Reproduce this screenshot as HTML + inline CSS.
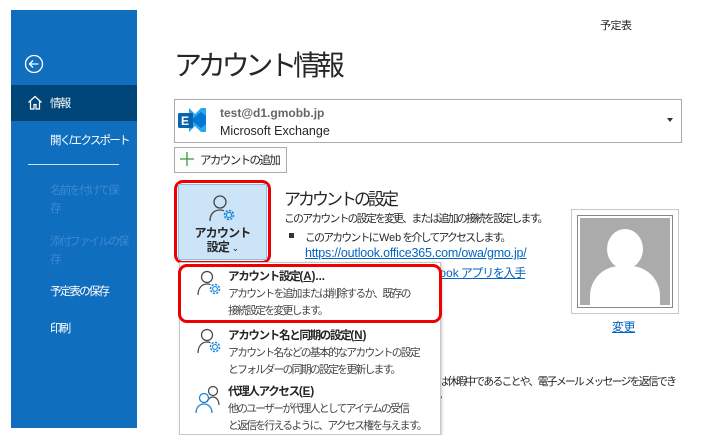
<!DOCTYPE html>
<html><head><meta charset="utf-8"><style>
*{margin:0;padding:0;box-sizing:border-box}
body{width:705px;height:435px;background:#fff;position:relative;overflow:hidden;font-family:"Liberation Sans","Noto Sans CJK JP",sans-serif;color:#262626}
.a{position:absolute;white-space:nowrap}
.n{letter-spacing:0}
.side{position:absolute;left:11px;top:10px;width:126px;height:418px;background:#106ebe}
.sel{position:absolute;left:11px;top:85px;width:126px;height:36px;background:#004578}
.st{color:#fff;font-size:11.5px;letter-spacing:-1.8px}
.dim{color:#3c8ad0;font-size:11.5px;line-height:18px;letter-spacing:-1.8px}
.lnk{color:#0563c1;text-decoration:underline}
.t12{font-size:10.8px;letter-spacing:-1.7px}
.d{font-size:10.8px;line-height:17px;color:#444;letter-spacing:-1.7px}
.h{font-size:11.5px;font-weight:bold;letter-spacing:-1.3px}
</style></head><body>
<div class="side"></div><div class="sel"></div>
<svg class="a" style="left:24px;top:54px" width="20" height="20" viewBox="0 0 20 20"><circle cx="10" cy="10" r="8.5" fill="none" stroke="#fff" stroke-width="1.3"/><path d="M14.5 10H5.5M9 6.5L5.5 10 9 13.5" fill="none" stroke="#fff" stroke-width="1.3"/></svg>
<svg class="a" style="left:27px;top:95px" width="16" height="15" viewBox="0 0 16 15"><path d="M1.5 7.5L8 1.5l6.5 6M3.5 6v8h3.5v-4.5h2V14h3.5V6" fill="none" stroke="#fff" stroke-width="1.2"/></svg>
<div class="a st" style="left:50px;top:95px">情報</div>
<div class="a st" style="left:50px;top:132px">開く/エクスポート</div>
<div class="a" style="left:28px;top:164px;width:91px;height:1px;background:#cfe1f3"></div>
<div class="a dim" style="left:50px;top:182px">名前を付けて保<br>存</div>
<div class="a dim" style="left:50px;top:233px">添付ファイルの保<br>存</div>
<div class="a st" style="left:50px;top:283px">予定表の保存</div>
<div class="a st" style="left:50px;top:320px">印刷</div>

<div class="a" style="left:600px;top:17px;font-size:11px;letter-spacing:-0.5px">予定表</div>
<div class="a" style="left:174px;top:44px;font-size:28px;color:#262626;letter-spacing:-4.2px">アカウント情報</div>

<div class="a" style="left:174px;top:99px;width:508px;height:44px;border:1px solid #ababab"></div>
<svg class="a" style="left:177px;top:104px" width="30" height="32" viewBox="0 0 30 32"><path d="M12 4l6 6 6-6h5v8l-5 4 5 4v8h-5l-6-6-6 6z" fill="#28a8ea"/><path d="M14 16l10-8 5 4v8l-5 4z" fill="#0078d4"/><rect x="1" y="9" width="15" height="15" rx="1.5" fill="#0a64ad"/><text x="4" y="21" font-family="Liberation Sans" font-weight="bold" font-size="12" fill="#fff">E</text></svg>
<div class="a" style="left:220px;top:106px;font-size:12px;color:#666;font-weight:bold">test@d1.gmobb.jp</div>
<div class="a" style="left:220px;top:124px;font-size:12.5px;color:#262626">Microsoft Exchange</div>
<div class="a" style="left:667px;top:118px;width:0;height:0;border-left:3.5px solid transparent;border-right:3.5px solid transparent;border-top:4px solid #333"></div>

<div class="a" style="left:174px;top:147px;width:113px;height:26px;border:1px solid #ababab;background:#fdfdfd"></div>
<svg class="a" style="left:179px;top:151px" width="16" height="16" viewBox="0 0 16 16"><path d="M8 1v14M1 8h14" stroke="#3a9a3a" stroke-width="1.3"/></svg>
<div class="a" style="left:200px;top:152px;font-size:11.5px;letter-spacing:-1.6px">アカウントの追加</div>

<div class="a" style="left:174px;top:180px;width:97px;height:84px;border:3px solid #e00;border-radius:9px"></div>
<div class="a" style="left:178px;top:184px;width:89px;height:76px;background:#cce4f7;border:1px solid #8fbde8"></div>
<svg class="a" style="left:207px;top:193px" width="32" height="32" viewBox="0 0 32 32"><circle cx="13" cy="9" r="6" fill="none" stroke="#444" stroke-width="1.3"/><path d="M3 28c0-7 4-11 10-11 2 0 3 .3 4 .8" fill="none" stroke="#444" stroke-width="1.3"/><circle cx="22" cy="22" r="4.5" fill="none" stroke="#1a86d9" stroke-width="1.6" stroke-dasharray="2.2 1.3"/><circle cx="22" cy="22" r="2.6" fill="none" stroke="#1a86d9" stroke-width="1.2"/></svg>
<div class="a" style="left:178px;top:226px;width:89px;text-align:center;font-size:12px;font-weight:bold;line-height:14px;letter-spacing:-0.8px">アカウント<br>設定 <span style="font-weight:normal;font-size:9px">⌄</span></div>

<div class="a" style="left:284px;top:185px;font-size:17px;letter-spacing:-3px">アカウントの設定</div>
<div class="a t12" style="left:284px;top:210px">このアカウントの設定を変更、または追加の接続を設定します。</div>
<div class="a" style="left:289px;top:233px;width:5px;height:5px;background:#333"></div>
<div class="a t12" style="left:305px;top:229px">このアカウントに <span class="n">Web</span> を介してアクセスします。</div>
<div class="a lnk" style="left:305px;top:246px;font-size:12.5px;letter-spacing:-0.2px">https://outlook.office365.com/owa/gmo.jp/</div>
<div class="a lnk" style="left:305px;top:264px;font-size:12px;letter-spacing:-1.3px"><span class="n">iOS</span> または <span class="n">Android</span> 用 <span class="n">Outlook</span> アプリを入手</div>

<div class="a" style="left:571px;top:209px;width:108px;height:105px;border:1px solid #c8c8c8;background:#fff"></div>
<div class="a" style="left:577px;top:215px;width:96px;height:93px;border:1px solid #888;background:#fff;padding:2px"><div style="width:100%;height:100%;background:#ababab;position:relative;overflow:hidden"><div style="position:absolute;left:27px;top:11px;width:36px;height:40px;border-radius:50%;background:#fff"></div><div style="position:absolute;left:10px;top:48px;width:70px;height:60px;border-radius:30px 30px 0 0;background:#fff"></div></div></div>
<div class="a lnk" style="left:612px;top:318px;font-size:12px;letter-spacing:-0.5px">変更</div>

<div class="a t12" style="left:438px;top:373px">は休暇中であることや、電子メール メッセージを返信でき</div>
<div class="a t12" style="left:438px;top:386px">。</div>

<div class="a" style="left:179px;top:262px;width:262px;height:173px;background:#fff;border:1px solid #c6c6c6;box-shadow:1px 1px 3px rgba(0,0,0,.2)"></div>
<div class="a" style="left:178px;top:264px;width:264px;height:59px;border:3px solid #e00;border-radius:9px"></div>

<svg class="a" style="left:196px;top:270px" width="28" height="28" viewBox="0 0 28 28"><circle cx="11" cy="7" r="5.5" fill="none" stroke="#444" stroke-width="1.2"/><path d="M2 25c0-7 4-11 9-11 1.5 0 2.5.3 3.5.7" fill="none" stroke="#444" stroke-width="1.2"/><circle cx="19" cy="19" r="4.5" fill="none" stroke="#1a86d9" stroke-width="1.5" stroke-dasharray="2.2 1.3"/><circle cx="19" cy="19" r="2.4" fill="none" stroke="#1a86d9" stroke-width="1.1"/></svg>
<div class="a h" style="left:228px;top:268px">アカウント設定<span class="n">(<u>A</u>)...</span></div>
<div class="a d" style="left:228px;top:286px">アカウントを追加または削除するか、既存の<br>接続設定を変更します。</div>

<svg class="a" style="left:196px;top:328px" width="28" height="28" viewBox="0 0 28 28"><circle cx="11" cy="7" r="5.5" fill="none" stroke="#444" stroke-width="1.2"/><path d="M2 25c0-7 4-11 9-11 1.5 0 2.5.3 3.5.7" fill="none" stroke="#444" stroke-width="1.2"/><circle cx="19" cy="19" r="4.5" fill="none" stroke="#1a86d9" stroke-width="1.5" stroke-dasharray="2.2 1.3"/><circle cx="19" cy="19" r="2.4" fill="none" stroke="#1a86d9" stroke-width="1.1"/></svg>
<div class="a h" style="left:228px;top:327px">アカウント名と同期の設定<span class="n">(<u>N</u>)</span></div>
<div class="a d" style="left:228px;top:345px">アカウント名などの基本的なアカウントの設定<br>とフォルダーの同期の設定を更新します。</div>

<svg class="a" style="left:194px;top:384px" width="30" height="30" viewBox="0 0 30 30"><circle cx="19" cy="7" r="4.5" fill="none" stroke="#444" stroke-width="1.2"/><path d="M13 18c1-3 3-5 6-5s6 3 6 8" fill="none" stroke="#444" stroke-width="1.2"/><circle cx="10" cy="14" r="4.5" fill="none" stroke="#1a86d9" stroke-width="1.3"/><path d="M2 29c0-5 3-9 8-9s8 4 8 9" fill="none" stroke="#1a86d9" stroke-width="1.3"/></svg>
<div class="a h" style="left:228px;top:383px">代理人アクセス<span class="n">(<u>E</u>)</span></div>
<div class="a d" style="left:228px;top:401px">他のユーザーが代理人としてアイテムの受信<br>と返信を行えるように、アクセス権を与えます。</div>
</body></html>
